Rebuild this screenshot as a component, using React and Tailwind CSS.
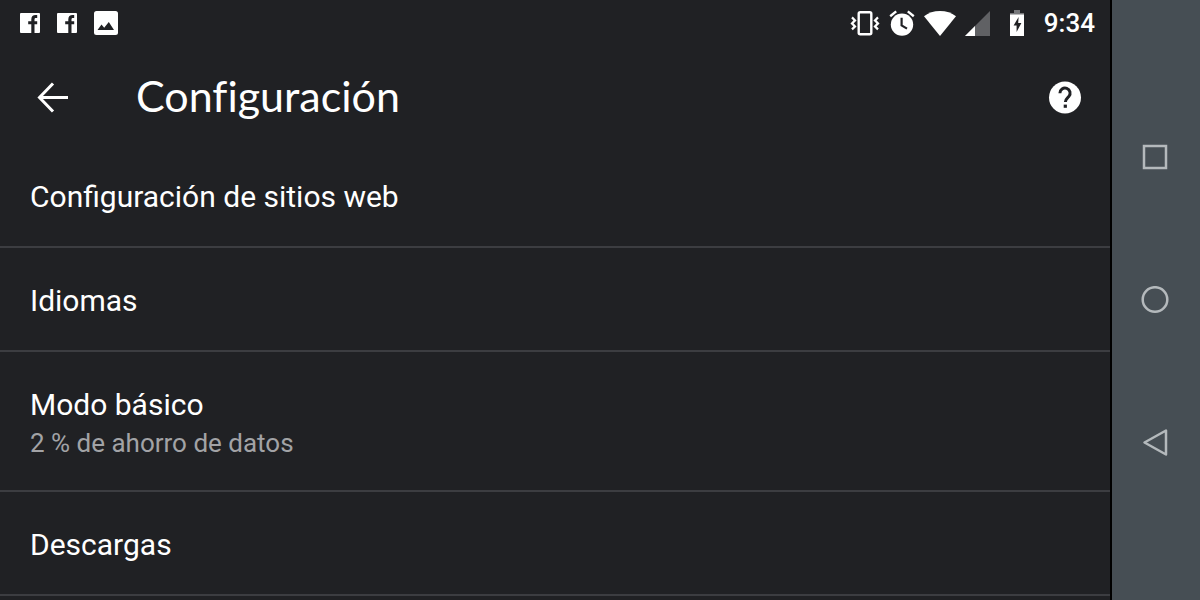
const settings = [
  { title: "Configuración de sitios web" },
  { title: "Idiomas" },
  { title: "Modo básico", summary: "2 % de ahorro de datos" },
  { title: "Descargas" },
];

function FacebookIcon() {
  return (
    <svg width="20" height="20" viewBox="0 0 20 20" aria-hidden="true">
      <rect width="20" height="20" rx="1" fill="#fff" />
      <path
        d="M11.300 20v-8.800H8.200V8.200h3.100V6.400c0-2.900 1.600-4.300 4.300-4.300h1.600v3h-1.200c-1.200 0-1.500.5-1.500 1.500v1.600h2.700v3h-2.700V20z"
        fill="#202124"
      />
    </svg>
  );
}

function ImageIcon() {
  return (
    <svg width="24" height="24" viewBox="0 0 24 24" aria-hidden="true">
      <rect width="24" height="24" rx="2.5" fill="#fff" />
      <path d="M3.500 19l4-5.500 2.700 3.200 4.600-5.700 5.200 8z" fill="#202124" />
    </svg>
  );
}

function VibrateIcon() {
  return (
    <svg width="30" height="26" viewBox="0 0 30 26" fill="none" stroke="#fff" aria-hidden="true">
      <rect x="8.700" y="2.200" width="12.600" height="22" rx="1.5" strokeWidth="2.400" />
      <path d="M2 7.400l3 3-3 3 3 3-3 3M28 7.400l-3 3 3 3-3 3 3 3" strokeWidth="2.200" />
    </svg>
  );
}

function AlarmIcon() {
  return (
    <svg width="26" height="26" viewBox="0 0 26 26" fill="none" aria-hidden="true">
      <circle cx="13" cy="14.6" r="11.2" fill="#fff" />
      <path d="M1.2 6.2l6-4.8M24.8 6.2l-6-4.8" stroke="#fff" strokeWidth="2.4" />
      <path d="M12.6 7.8v7.6l5.4 3.2" stroke="#202124" strokeWidth="2.2" />
    </svg>
  );
}

function WifiIcon() {
  return (
    <svg width="32" height="26" viewBox="0 0 32 26" aria-hidden="true">
      <path d="M16 26L0 6.2C4.400 2.800 9.800 1 16 1s11.600 1.800 16 5.200z" fill="#fff" />
    </svg>
  );
}

function SignalIcon() {
  return (
    <svg width="26" height="26" viewBox="0 0 26 26" aria-hidden="true">
      <path d="M0 26L25 1v25z" fill="#606164" />
      <path d="M0 26l10-10v10z" fill="#fff" />
    </svg>
  );
}

function BatteryIcon() {
  return (
    <svg width="16" height="26" viewBox="0 0 16 26" aria-hidden="true">
      <path d="M5 0h6v3h4v2H1V3h4z" fill="#77787b" />
      <path d="M1 4.500h14V26H1z" fill="#fff" />
      <path d="M9.600 7L4.600 15.500h3v6.500l4.800-9H9.200z" fill="#202124" />
    </svg>
  );
}

function StatusBar() {
  return (
    <div className="flex h-[46px] items-center justify-between pr-[15px] pl-5">
      <div className="flex items-center gap-[17px]">
        <FacebookIcon />
        <FacebookIcon />
        <ImageIcon />
      </div>
      <div className="flex items-center">
        <div className="mr-[18px] flex items-center gap-[9px]">
          <VibrateIcon />
          <AlarmIcon />
          <WifiIcon />
          <SignalIcon />
        </div>
        <BatteryIcon />
        <time className="ml-[19px] text-[26px] leading-8 font-medium">9:34</time>
      </div>
    </div>
  );
}

function Header() {
  return (
    <header className="flex h-[98px] items-center pt-1 pr-7 pl-9">
      <button type="button" aria-label="Atrás" className="mr-[66px] shrink-0">
        <svg width="34" height="34" viewBox="0 0 34 34" fill="none" stroke="#fff" strokeWidth="3">
          <path d="M32 17.500H4M17 3.500L3.500 17.500l13.500 14" />
        </svg>
      </button>
      <h1 className="grow pb-0.5 font-['Lato',sans-serif] text-[43px] leading-[52px] [font-variant-ligatures:none]">
        Configuración
      </h1>
      <button type="button" aria-label="Ayuda" className="shrink-0">
        <svg width="34" height="34" viewBox="0 0 34 34" fill="none">
          <circle cx="17" cy="17.500" r="16" fill="#fff" />
          <path
            d="M11.900 13.300a5.100 5.100 0 1 1 8.900 3.300c-1.700 1.900-3.400 2.500-3.400 5.400"
            stroke="#202124"
            strokeWidth="3"
          />
          <path d="M15.700 24.600h3.200v3.200h-3.200z" fill="#202124" />
        </svg>
      </button>
    </header>
  );
}

function SettingRow({ title, summary }) {
  return (
    <li className="border-b-2 border-[#3c3d41]">
      <a href="#" className="block px-[30px] pt-[33px] pb-[29px]">
        <span className="block text-[30px] leading-10">{title}</span>
        {summary && (
          <span className="block text-[26px] leading-9 text-[#a2a3a6]">{summary}</span>
        )}
      </a>
    </li>
  );
}

function NavigationBar() {
  return (
    <nav
      aria-label="Sistema"
      className="flex w-[90px] shrink-0 flex-col border-l-2 border-black bg-[#464e54] py-[86px] pr-0.5"
    >
      <button type="button" aria-label="Recientes" className="flex flex-1 items-center justify-center">
        <svg width="28" height="28" viewBox="0 0 28 28" fill="none" stroke="#b4b9bc" strokeWidth="2.500">
          <rect x="3" y="3" width="22" height="22" />
        </svg>
      </button>
      <button type="button" aria-label="Inicio" className="flex flex-1 items-center justify-center">
        <svg width="28" height="28" viewBox="0 0 28 28" fill="none" stroke="#b4b9bc" strokeWidth="2.500">
          <circle cx="14" cy="13.500" r="12.300" />
        </svg>
      </button>
      <button type="button" aria-label="Volver" className="flex flex-1 items-center justify-center">
        <svg width="28" height="28" viewBox="0 0 28 28" fill="none" stroke="#b4b9bc" strokeWidth="2.500">
          <path d="M25 1.500v24L3.500 13.500z" strokeLinejoin="round" />
        </svg>
      </button>
    </nav>
  );
}

function App() {
  return (
    <div className="flex min-h-screen bg-[#202124] font-['Roboto',sans-serif] text-white">
      <main className="min-w-0 flex-1">
        <StatusBar />
        <Header />
        <ul>
          {settings.map((item) => (
            <SettingRow key={item.title} title={item.title} summary={item.summary} />
          ))}
        </ul>
      </main>
      <NavigationBar />
    </div>
  );
}

export default App;
